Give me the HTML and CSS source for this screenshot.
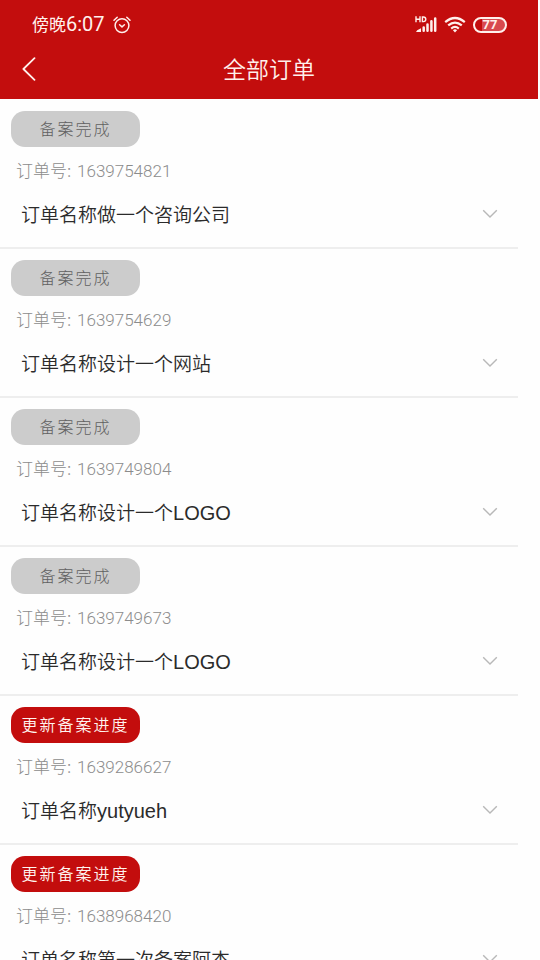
FILE: index.html
```html
<!DOCTYPE html>
<html lang="zh-CN">
<head>
<meta charset="utf-8">
<meta name="viewport" content="width=device-width, initial-scale=1">
<title>全部订单</title>
<link rel="stylesheet" href="styles.css">
</head>
<body>
<div class="app">
  <header class="header">
    <div class="status">
      <div class="status-left">
        <span class="clock"><span class="clock-period">傍晚</span>6:07</span>
        <svg class="alarm" width="18" height="18" viewBox="0 0 18 18" fill="none" stroke="currentColor" stroke-width="1.5" stroke-linecap="round" stroke-linejoin="round">
          <circle cx="9" cy="9.6" r="6.9"/>
          <path d="M6.6 8.8 9 10.9 11.4 8.8M1 4.2 4.2 1.2M17 4.2 13.8 1.2"/>
        </svg>
      </div>
      <div class="status-right">
        <svg width="22" height="18" viewBox="0 0 22 18" fill="none" stroke="currentColor">
          <path stroke-width="1.4" d="M1 .3V6.3M5 .3V6.3M1 3.3H5M7.4 1V5.6H8.4Q10.8 5.6 10.8 3.3Q10.8 1 8.4 1Z"/>
          <path stroke-width="2.5" stroke-linecap="round" d="M8.7 11.4V14.8M12.5 8.4V14.8M16.4 5.2V14.8M20.2 2.4V14.8"/>
          <path fill="currentColor" stroke="none" d="M1 16 2.2 14.3 6 12.2V16Z"/>
        </svg>
        <svg width="22" height="18" viewBox="0 0 22 18" fill="none" stroke="currentColor" stroke-width="2.2">
          <path d="M1.2 6.1Q11-2.1 20.8 6.1M4.2 9.4Q11 3.7 17.8 9.4M7.2 12.6Q11 9.3 14.8 12.6"/>
          <path fill="currentColor" stroke="none" d="M8.9 14.2Q11 12.5 13.1 14.2L11 16.4Z"/>
        </svg>
        <span class="battery">77</span>
      </div>
    </div>
    <div class="nav">
      <button class="back" type="button" aria-label="返回">
        <svg width="14" height="24" viewBox="0 0 14 24" fill="none" stroke="currentColor" stroke-width="1.8" stroke-linecap="round" stroke-linejoin="round"><path d="M12.5 1.2 1.4 12 12.5 22.8"/></svg>
      </button>
      <h1 class="title">全部订单</h1>
    </div>
  </header>
  <main class="orders">
    <article class="order">
      <button class="tag" type="button">备案完成</button>
      <p class="number">订单号: <span class="digits">1639754821</span></p>
      <button class="name" type="button" aria-expanded="false"><span>订单名称做一个咨询公司</span><svg class="chevron" width="16" height="10" viewBox="0 0 16 10"><path d="M1.2 1.2 8 8 14.8 1.2"/></svg></button>
    </article>
    <article class="order">
      <button class="tag" type="button">备案完成</button>
      <p class="number">订单号: <span class="digits">1639754629</span></p>
      <button class="name" type="button" aria-expanded="false"><span>订单名称设计一个网站</span><svg class="chevron" width="16" height="10" viewBox="0 0 16 10"><path d="M1.2 1.2 8 8 14.8 1.2"/></svg></button>
    </article>
    <article class="order">
      <button class="tag" type="button">备案完成</button>
      <p class="number">订单号: <span class="digits">1639749804</span></p>
      <button class="name" type="button" aria-expanded="false"><span>订单名称设计一个<span class="latin">LOGO</span></span><svg class="chevron" width="16" height="10" viewBox="0 0 16 10"><path d="M1.2 1.2 8 8 14.8 1.2"/></svg></button>
    </article>
    <article class="order">
      <button class="tag" type="button">备案完成</button>
      <p class="number">订单号: <span class="digits">1639749673</span></p>
      <button class="name" type="button" aria-expanded="false"><span>订单名称设计一个<span class="latin">LOGO</span></span><svg class="chevron" width="16" height="10" viewBox="0 0 16 10"><path d="M1.2 1.2 8 8 14.8 1.2"/></svg></button>
    </article>
    <article class="order">
      <button class="tag tag-active" type="button">更新备案进度</button>
      <p class="number">订单号: <span class="digits">1639286627</span></p>
      <button class="name" type="button" aria-expanded="false"><span>订单名称<span class="latin">yutyueh</span></span><svg class="chevron" width="16" height="10" viewBox="0 0 16 10"><path d="M1.2 1.2 8 8 14.8 1.2"/></svg></button>
    </article>
    <article class="order">
      <button class="tag tag-active" type="button">更新备案进度</button>
      <p class="number">订单号: <span class="digits">1638968420</span></p>
      <button class="name" type="button" aria-expanded="false"><span>订单名称第一次备案阿杰</span><svg class="chevron" width="16" height="10" viewBox="0 0 16 10"><path d="M1.2 1.2 8 8 14.8 1.2"/></svg></button>
    </article>
  </main>
</div>
</body>
</html>
```
FILE: styles.css
```css
* {
  box-sizing: border-box;
}

body {
  margin: 0;
  background: #fefefe;
  color: #2b2b2b;
  font-family: "Noto Sans CJK SC", sans-serif;
}

button {
  margin: 0;
  padding: 0;
  border: 0;
  background: none;
  color: inherit;
  font-family: inherit;
}

svg {
  display: block;
  flex: none;
}

.app {
  display: flex;
  flex-direction: column;
  height: 100vh;
  margin-right: 2px;
  overflow: hidden;
}

.header {
  flex: none;
  padding-top: 10px;
  background: #c30d0d;
  color: #fff0ec;
}

.status {
  display: flex;
  justify-content: space-between;
  align-items: center;
  height: 29px;
  padding: 0 31px 0 32px;
}

.status-left,
.status-right {
  display: flex;
  align-items: center;
  gap: 8px;
}

.status-right {
  gap: 7px;
}

.clock {
  font-family: Roboto, "Noto Sans CJK SC", sans-serif;
  font-size: 20px;
  line-height: 29px;
}

.clock-period {
  font-size: 17px;
}

.battery {
  width: 34px;
  height: 16px;
  border: 2px solid currentColor;
  border-radius: 8px;
  background: linear-gradient(to right, transparent 7px, #d84a4f 7px);
  font: bold 13px/12px Roboto, sans-serif;
  text-align: center;
}

.nav {
  display: grid;
  grid-template-columns: 58px 1fr 58px;
  align-items: center;
  height: 60px;
}

.back {
  display: flex;
  align-items: center;
  height: 60px;
  padding-left: 22px;
}

.title {
  margin: 0;
  padding-bottom: 2px;
  font-size: 23px;
  font-weight: 350;
  line-height: 58px;
  text-align: center;
}

.orders {
  flex: 1;
  min-height: 0;
  padding-top: 1px;
  overflow-y: auto;
  scrollbar-width: none;
}

.order {
  display: flex;
  flex-direction: column;
  align-items: flex-start;
  height: 149px;
  margin-right: 20px;
  padding-top: 11px;
  border-bottom: 2px solid #eeeeee;
}

.tag {
  min-width: 129px;
  height: 36px;
  margin-left: 11px;
  padding-bottom: 2px;
  border-radius: 14px;
  background: #cccccc;
  color: #606060;
  font-size: 16px;
  font-weight: 300;
  letter-spacing: 2px;
}

.tag-active {
  background: #c30d0d;
  color: #fff4f0;
  font-weight: 350;
}

.number {
  margin: 11px 0 0 16px;
  color: #8c8c8c;
  font-size: 17px;
  font-weight: 300;
  line-height: 24px;
}

.digits {
  margin-left: 2px;
  font-family: Roboto, sans-serif;
}

.name {
  display: flex;
  justify-content: space-between;
  align-items: center;
  width: 100%;
  height: 62px;
  padding: 0 20px 0 21px;
  font-size: 19px;
  font-weight: 350;
  line-height: 28px;
}

.latin {
  font-family: "Liberation Sans", sans-serif;
  font-size: 20px;
}

.chevron {
  fill: none;
  stroke: #b8b8b8;
  stroke-width: 1.4;
}
```
